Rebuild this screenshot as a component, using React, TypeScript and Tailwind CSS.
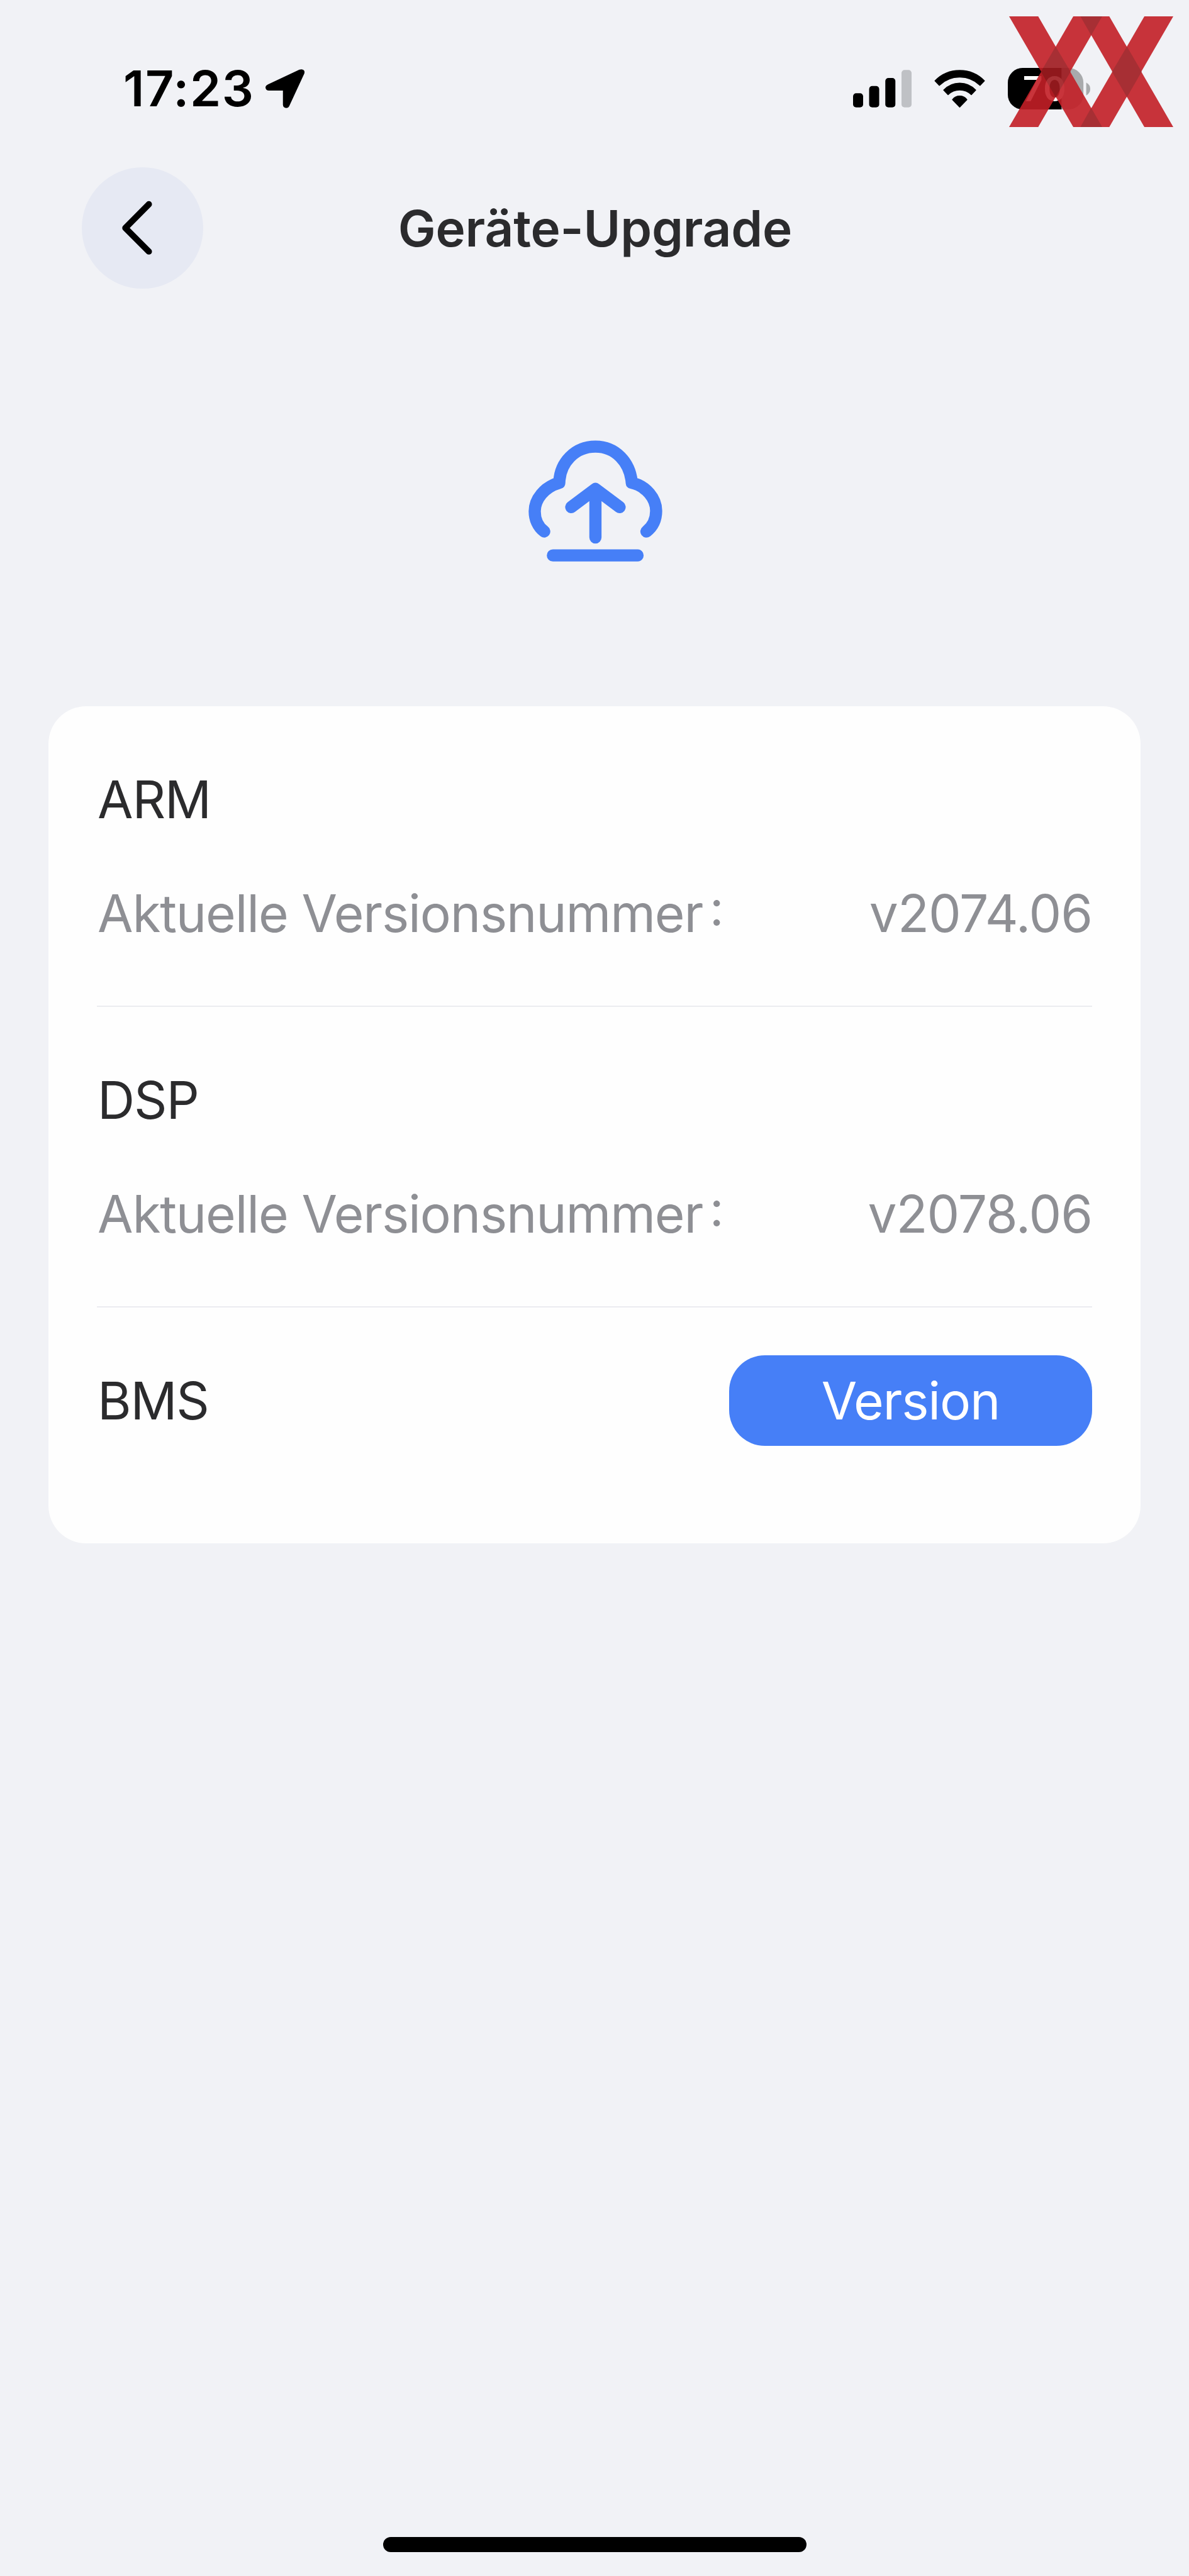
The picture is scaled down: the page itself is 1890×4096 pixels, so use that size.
// App.tsx

const versions = [
  { name: "ARM", version: "v2074.06" },
  { name: "DSP", version: "v2078.06" },
];

function LocationArrow() {
  return (
    <svg className="w-[62px] h-[62px]" viewBox="986 97 190 189" fill="#000">
      <path d="M998 171L1151 99Q1166 94 1173 102Q1179 109 1174 120L1102 276Q1097 286 1087 286Q1072 285 1071 270V201H1003Q987 200 986 185Q987 176 998 171Z" />
    </svg>
  );
}

function SignalBars() {
  return (
    <svg className="w-[93px] h-[60px]" viewBox="0 0 94.7 60.7">
      <rect x="0" y="37.7" width="16.3" height="23" rx="5" />
      <rect x="26" y="26" width="16.3" height="34.7" rx="5" />
      <rect x="52.2" y="13" width="16.3" height="47.7" rx="5" />
      <rect x="78.4" y="0" width="16.3" height="60.7" rx="5" fill="#bfc1c5" />
    </svg>
  );
}

function Wifi() {
  return (
    <svg className="w-[81px] h-[60px] overflow-visible" viewBox="0 0 81.4 60.7">
      <g stroke="#000" strokeWidth="1.5" strokeLinejoin="round">
        <path d="M1 17.7A55.6 55.6 0 0 1 80.4 17.7L73.4 25A47 47 0 0 0 8 25Z" />
        <path d="M15 32.7A35 35 0 0 1 66.4 32.7L59.4 40A27 27 0 0 0 22 40Z" />
        <path d="M29.2 48A14.5 14.5 0 0 1 52.2 48L40.7 59.9Z" />
      </g>
    </svg>
  );
}

function Battery() {
  return (
    <svg className="w-[131px] h-[66px]" viewBox="0 0 133 67">
      <clipPath id="level">
        <rect x="0" y="0" width="86.6" height="67" />
      </clipPath>
      <rect width="122" height="67" rx="24" fill="#a8aaac" />
      <rect width="122" height="67" rx="24" fill="#000" clipPath="url(#level)" />
      <path d="M126.5 23.5Q133 27 133 33.8Q133 41 126.5 44.5Z" fill="#a8aaac" />
      <text x="24" y="54" textLength="70" fill="#fff" fontFamily="Inter, sans-serif" fontSize="56" fontWeight="600">
        70
      </text>
    </svg>
  );
}

function CloudUpload() {
  return (
    <svg
      className="w-[217px] h-[193px]"
      viewBox="91 93 660 588"
      fill="none"
      stroke="#467ff7"
      strokeWidth="59"
      strokeLinecap="round"
      strokeLinejoin="round"
    >
      <path d="M176 535C145 512 130 475 130 437C130 380 175 320 249 299C252 200 325 124 424 124C522 124 592 200 600 299C670 315 718 375 718 435C718 475 702 511 671 535" />
      <path d="M307 417L424 329L541 417M424 340V564M218 651H628" />
    </svg>
  );
}

function Watermark() {
  return (
    <svg
      className="absolute top-[26px] left-[1604px] w-[261px] h-[176px] opacity-90"
      viewBox="782 79 716 536"
      preserveAspectRatio="none"
    >
      <g fill="#c31f26">
        <path d="M782 79H909L1188 615H1062Z" />
        <path d="M782 615H909L1188 79H1062Z" />
        <path d="M1093 79H1219L1498 615H1372Z" />
        <path d="M1093 615H1219L1498 79H1372Z" />
      </g>
      <g fill="#a01b20">
        <path d="M985 225L1050 347L985 470L921 347Z" />
        <path d="M1296 225L1360 347L1296 470L1231 347Z" />
        <path d="M1093 79H1188L1140 170Z" />
        <path d="M1093 615H1188L1140 522Z" />
      </g>
    </svg>
  );
}

export default function App() {
  return (
    <div className="relative flex flex-col w-[1890px] h-[4096px] bg-[#f1f2f6] font-['Inter',sans-serif] text-[82px] leading-[97px] tracking-[-1.2px] text-[#2b2b2d] whitespace-nowrap overflow-hidden">
      <div className="h-[266px] pt-[15px] pl-[196px] pr-[157px] flex items-center justify-between text-black">
        <div className="flex items-center gap-[18px]">
          <span className="text-[79px] font-semibold tracking-[1.5px]">17:23</span>
          <LocationArrow />
        </div>
        <div className="flex items-center gap-[36px] tracking-normal">
          <SignalBars />
          <Wifi />
          <Battery />
        </div>
      </div>

      <header className="h-[193px] px-[130px] grid grid-cols-[1fr_auto_1fr] items-center">
        <button className="size-[193px] rounded-full bg-[#e6e9f3]" aria-label="Zurück">
          <svg className="size-[193px]" viewBox="0 0 196 196" fill="none" stroke="#000" strokeWidth="10" strokeLinecap="round" strokeLinejoin="round">
            <path d="M108.3 59.7L70.3 98L108.3 136" />
          </svg>
        </button>
        <h1 className="pl-[2px] text-[80px] font-semibold tracking-[-0.2px]">Geräte-Upgrade</h1>
      </header>

      <div className="mt-[241px] flex justify-center">
        <CloudUpload />
      </div>

      <main className="mt-[230px] mx-[77px] h-[1331px] px-[77px] rounded-[60px] bg-[#fefefe]">
        {versions.map(v => (
          <section key={v.name} className="flex flex-col gap-[84px] pt-[100px] pb-[98px] border-b-2 border-[#ebecf0]">
            <div className="pl-px">{v.name}</div>
            <div className="h-[97px] pl-px flex justify-between text-[#8e8f94]">
              <span>
                Aktuelle Versionsnummer
                {/* the colon sits a little above the baseline */}
                <span className="relative -top-[10px] ml-[11px] text-[78px] leading-none">:</span>
              </span>
              <span className="tracking-[-1px]">{v.version}</span>
            </div>
          </section>
        ))}
        <section className="pt-[76px] flex items-center justify-between">
          <span className="pl-px">BMS</span>
          <button className="w-[577px] h-[144px] rounded-[57px] bg-[#467ff7] text-white">Version</button>
        </section>
      </main>

      <div className="mt-auto mb-[38px] mx-auto w-[673px] h-[24px] rounded-full bg-black" />

      <Watermark />
    </div>
  );
}
